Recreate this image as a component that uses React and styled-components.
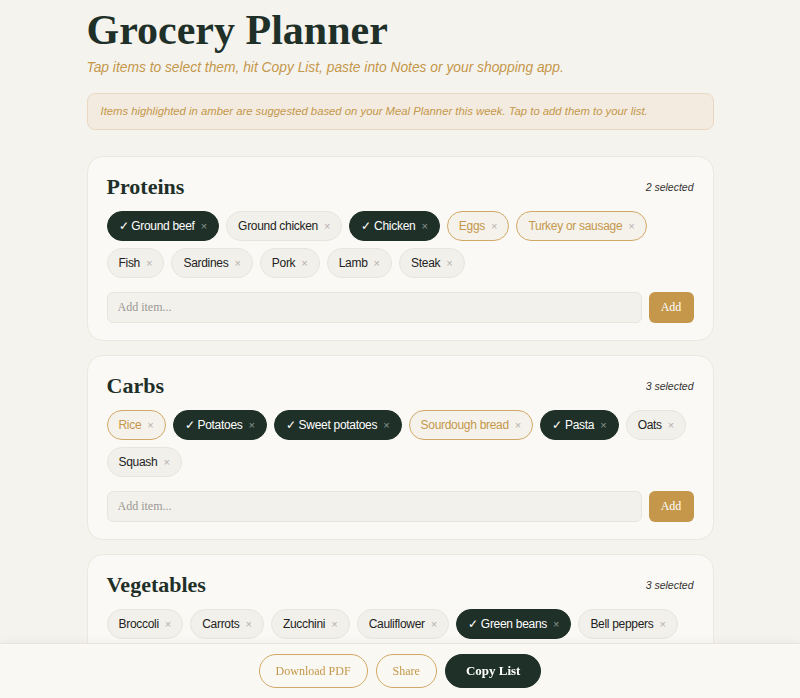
import React from 'react';
import styled, { createGlobalStyle, css } from 'styled-components';

const GlobalStyle = createGlobalStyle`
	* {
		box-sizing: border-box;
	}

	body {
		margin: 0;
		background: #f5f3ee;
		font-family: 'Liberation Sans', Arial, sans-serif;
		color: #222;
	}
`;

const Page = styled.div`
	width: 627px;
	margin: 0 auto;
	padding: 6px 0 80px;
`;

const Title = styled.h1`
	margin: 0;
	font-family: 'Liberation Serif', 'Times New Roman', serif;
	font-size: 42px;
	line-height: 48px;
	font-weight: 700;
	color: #1f3029;
`;

const Subtitle = styled.p`
	margin: 4px 0 15px;
	font-size: 13.8px;
	line-height: 20px;
	font-style: italic;
	color: #c4974a;
`;

const Notice = styled.div`
	padding: 10px 13px;
	background: #f3ebe0;
	border: 1px solid #ead9c0;
	border-radius: 8px;
	font-size: 11.3px;
	line-height: 15px;
	font-style: italic;
	color: #c4974a;
	margin-bottom: 26px;
`;

const Card = styled.section`
	background: #fbf9f5;
	border: 1px solid #ece8e0;
	border-radius: 16px;
	padding: 17px 19px 17px;
	margin-bottom: 14px;
`;

const CardHeader = styled.div`
	display: flex;
	align-items: center;
	justify-content: space-between;
	margin-bottom: 11px;
`;

const CardTitle = styled.h2`
	margin: 0;
	font-family: 'Liberation Serif', 'Times New Roman', serif;
	font-size: 22px;
	line-height: 26px;
	font-weight: 700;
	color: #1f3029;
`;

const Count = styled.span`
	font-size: 10.5px;
	font-style: italic;
	color: #333;
`;

const Chips = styled.div`
	display: flex;
	flex-wrap: wrap;
	gap: 7px;
`;

const Chip = styled.button`
	display: inline-flex;
	align-items: center;
	gap: 6px;
	height: 30px;
	padding: 0 11px;
	border-radius: 15px;
	font-family: 'Liberation Sans', Arial, sans-serif;
	font-size: 12px;
	letter-spacing: -0.3px;
	border: 1px solid #e8e5df;
	background: #f2f0eb;
	color: #222;
	cursor: pointer;

	${(p) =>
		p.$state === 'selected' &&
		css`
			background: #1f3029;
			border-color: #1f3029;
			color: #fff;
		`}

	${(p) =>
		p.$state === 'suggested' &&
		css`
			background: #f5f2ec;
			border: 1.5px solid #d2a866;
			color: #c4974a;
		`}
`;

const Remove = styled.span`
	font-size: 11px;
	letter-spacing: 0;
	color: ${(p) => (p.$dark ? '#8a948f' : '#b5b2ad')};
`;

const AddRow = styled.div`
	display: flex;
	gap: 7px;
	margin-top: 14px;
`;

const AddInput = styled.input`
	flex: 1;
	height: 31px;
	padding: 0 10px;
	background: #f3f1ec;
	border: 1px solid #e8e5df;
	border-radius: 6px;
	font-family: 'Liberation Serif', 'Times New Roman', serif;
	font-size: 12px;
	color: #222;

	&::placeholder {
		color: #9a9894;
	}
`;

const AddButton = styled.button`
	width: 45px;
	height: 31px;
	border: none;
	border-radius: 6px;
	background: #c4974a;
	color: #fff;
	font-family: 'Liberation Serif', 'Times New Roman', serif;
	font-size: 12px;
`;

const Footer = styled.footer`
	position: fixed;
	left: 0;
	right: 0;
	bottom: 0;
	height: 55px;
	display: flex;
	align-items: center;
	justify-content: center;
	gap: 8px;
	background: #faf8f3;
	border-top: 1px solid #e9e5dd;
	box-shadow: 0 -2px 8px rgba(0, 0, 0, 0.04);
`;

const FooterButton = styled.button`
	height: 34px;
	padding: 0 16px;
	border-radius: 17px;
	font-family: 'Liberation Serif', 'Times New Roman', serif;
	font-size: 12px;
	border: 1px solid #d2a866;
	background: transparent;
	color: #c4974a;

	${(p) =>
		p.$primary &&
		css`
			padding: 0 20px;
			background: #1f3029;
			border-color: #1f3029;
			color: #fff;
			font-weight: 700;
			font-size: 13px;
		`}
`;

const sections = [
	{
		name: 'Proteins',
		items: [
			['Ground beef', 'selected'],
			['Ground chicken'],
			['Chicken', 'selected'],
			['Eggs', 'suggested'],
			['Turkey or sausage', 'suggested'],
			['Fish'],
			['Sardines'],
			['Pork'],
			['Lamb'],
			['Steak'],
		],
	},
	{
		name: 'Carbs',
		items: [
			['Rice', 'suggested'],
			['Potatoes', 'selected'],
			['Sweet potatoes', 'selected'],
			['Sourdough bread', 'suggested'],
			['Pasta', 'selected'],
			['Oats'],
			['Squash'],
		],
	},
	{
		name: 'Vegetables',
		items: [
			['Broccoli'],
			['Carrots'],
			['Zucchini'],
			['Cauliflower'],
			['Green beans', 'selected'],
			['Bell peppers'],
			['Spinach', 'selected'],
			['Onions'],
			['Mushrooms', 'selected'],
			['Asparagus', 'suggested'],
		],
	},
];

const Section = ({ name, items }) => {
	const count = items.filter((i) => i[1] === 'selected').length;
	return (
		<Card>
			<CardHeader>
				<CardTitle>{name}</CardTitle>
				<Count>{count} selected</Count>
			</CardHeader>
			<Chips>
				{items.map(([label, state]) => (
					<Chip key={label} $state={state}>
						{state === 'selected' ? `✓ ${label}` : label}
						<Remove $dark={state === 'selected'}>×</Remove>
					</Chip>
				))}
			</Chips>
			<AddRow>
				<AddInput placeholder="Add item..." />
				<AddButton>Add</AddButton>
			</AddRow>
		</Card>
	);
};

const App = () => (
	<>
		<GlobalStyle />
		<Page>
			<Title>Grocery Planner</Title>
			<Subtitle>
				Tap items to select them, hit Copy List, paste into Notes or your shopping app.
			</Subtitle>
			<Notice>
				Items highlighted in amber are suggested based on your Meal Planner this week. Tap to
				add them to your list.
			</Notice>
			{sections.map((s) => (
				<Section key={s.name} name={s.name} items={s.items} />
			))}
		</Page>
		<Footer>
			<FooterButton>Download PDF</FooterButton>
			<FooterButton>Share</FooterButton>
			<FooterButton $primary>Copy List</FooterButton>
		</Footer>
	</>
);

export default App;
